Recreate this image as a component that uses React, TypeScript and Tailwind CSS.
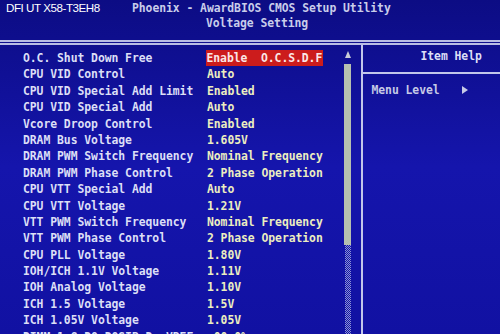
import React from "react";

const rows: [string, string][] = [
  ["O.C. Shut Down Free", "Enable  O.C.S.D.F"],
  ["CPU VID Control", "Auto"],
  ["CPU VID Special Add Limit", "Enabled"],
  ["CPU VID Special Add", "Auto"],
  ["Vcore Droop Control", "Enabled"],
  ["DRAM Bus Voltage", "1.605V"],
  ["DRAM PWM Switch Frequency", "Nominal Frequency"],
  ["DRAM PWM Phase Control", "2 Phase Operation"],
  ["CPU VTT Special Add", "Auto"],
  ["CPU VTT Voltage", "1.21V"],
  ["VTT PWM Switch Frequency", "Nominal Frequency"],
  ["VTT PWM Phase Control", "2 Phase Operation"],
  ["CPU PLL Voltage", "1.80V"],
  ["IOH/ICH 1.1V Voltage", "1.11V"],
  ["IOH Analog Voltage", "1.10V"],
  ["ICH 1.5 Voltage", "1.5V"],
  ["ICH 1.05V Voltage", "1.05V"],
  ["DIMM 1.8 DQ-DQSIB D. VREF", "-00.0%"],
];

const App: React.FC = () => {
  return (
    <div className="relative w-[500px] h-[334px] overflow-hidden bg-linear-to-b from-[#0c0c84] via-[#1515ac] to-[#1111a2] font-['DejaVu_Sans_Mono',monospace] font-semibold text-[11.4px] tracking-[-0.05px]">
      {/* photo watermark */}
      <div className="absolute left-[6px] top-[1px] font-['Liberation_Sans',Arial,sans-serif] font-normal text-[11.6px] leading-[14px] tracking-[-0.45px] text-white">
        DFI UT X58-T3EH8
      </div>

      <div className="h-[40px] pt-[1px] leading-[15px] text-[#c9cdea]">
        <div className="pl-[132px]">Phoenix - AwardBIOS CMOS Setup Utility</div>
        <div className="pl-[206px]">Voltage Setting</div>
      </div>
      <div className="h-[2px] bg-[#b9bde4]" />
      <div className="h-[1px]" />
      <div className="h-[2px] bg-[#b9bde4]" />

      <div className="flex h-[289px]">
        <div className="flex w-[361px]">
          <div className="w-[344px] pl-[23px] pt-[5px]">
            {rows.map(([label, value], i) => (
              <div key={label} className="grid grid-cols-[184px_1fr] h-[16.4px] leading-[16.4px] whitespace-pre">
                <span className="text-[#dcdff6]">{label}</span>
                <span>
                  {i === 0 ? (
                    <span className="inline-block bg-[#cc1c1c] text-[#fbe6e6] px-[0.5px] -ml-[1px]">{value}</span>
                  ) : (
                    <span className="text-[#eceec0]">{value}</span>
                  )}
                </span>
              </div>
            ))}
          </div>
          {/* scroll bar */}
          <div className="flex w-[7px] flex-col items-center pt-[6px]">
            <svg width="6" height="7" viewBox="0 0 6 7">
              <polygon points="3,0 6,7 0,7" fill="#c8ccd8" />
            </svg>
            <div className="mt-[6px] h-[181px] w-[7px] bg-[#b6c0b0]" />
            <div className="flex-1 w-[6px] bg-[repeating-conic-gradient(#8c92d4_0_25%,transparent_0_50%)] bg-[length:2px_2px]" />
          </div>
        </div>
        <div className="w-[1.5px] bg-[#c2c6ea]" />
        <div className="flex-1">
          <div className="h-[27px] pt-[3px] pl-[58px] leading-[16px] text-[#dcdff6]">Item Help</div>
          <div className="h-[1.5px] bg-[#c2c6ea]" />
          <div className="flex items-center pl-[9px] pt-[8px] leading-[16px] text-[#c6cae6]">
            <span>Menu Level</span>
            <svg className="ml-[22px]" width="6" height="8" viewBox="0 0 6 8">
              <polygon points="0,0 6,4 0,8" fill="#c6cae6" />
            </svg>
          </div>
        </div>
      </div>
    </div>
  );
};

export default App;
